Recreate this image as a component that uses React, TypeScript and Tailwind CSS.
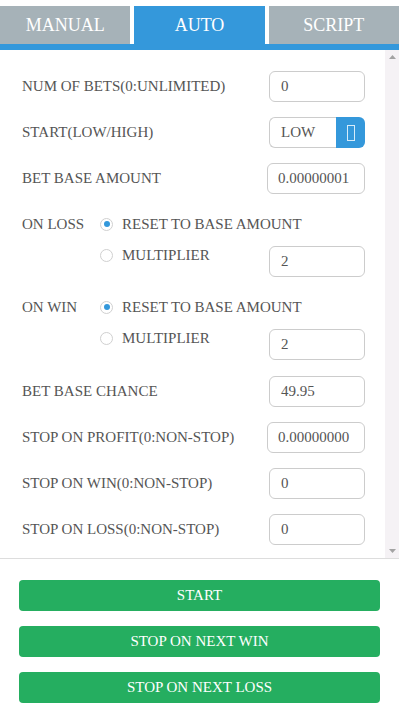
import React from 'react';

const font = { fontFamily: '"Liberation Serif", "Times New Roman", serif' };

function Field({ value, wide }: { value: string; wide?: boolean }) {
  return (
    <div
      className={`${wide ? 'w-[98px] px-[10px]' : 'w-[96px] px-[11px]'} h-[31px] border border-[#cccccc] rounded-[6px] bg-white flex items-center text-[15px] text-[#555555]`}
    >
      {value}
    </div>
  );
}

function Row({ label, value, wide }: { label: string; value: string; wide?: boolean }) {
  return (
    <div className="flex items-center justify-between h-[31px]">
      <span className="text-[15px] text-[#555555]">{label}</span>
      <Field value={value} wide={wide} />
    </div>
  );
}

function Radio({ checked }: { checked?: boolean }) {
  return (
    <span className="w-[13px] h-[13px] rounded-full border border-[#d0d0d0] bg-white flex items-center justify-center shrink-0">
      {checked && <span className="w-[6px] h-[6px] rounded-full bg-[#3498db]" />}
    </span>
  );
}

function ResultGroup({ label, last }: { label: string; last?: boolean }) {
  return (
    <div className={`flex flex-col ${last ? 'pb-[1px]' : ''}`}>
      <div className="flex items-center h-[30px] text-[15px] text-[#555555]">
        <span className="w-[78px]">{label}</span>
        <Radio checked />
        <span className="ml-[9px]">RESET TO BASE AMOUNT</span>
      </div>
      <div className="flex items-start justify-between mt-[1px]">
        <div className="flex items-center h-[30px] pl-[78px] text-[15px] text-[#555555]">
          <Radio />
          <span className="ml-[9px]">MULTIPLIER</span>
        </div>
        <div className="mt-[6px]">
          <Field value="2" />
        </div>
      </div>
    </div>
  );
}

export default function App() {
  const tabs = ['MANUAL', 'AUTO', 'SCRIPT'];
  return (
    <div className="w-[399px] h-[721px] bg-white flex flex-col" style={font}>
      {/* Tabs */}
      <div className="pt-[6px] grid grid-cols-3 gap-[4px]">
        {tabs.map((t) => (
          <div
            key={t}
            className={`h-[38px] flex items-center justify-center text-[18px] text-white ${
              t === 'AUTO' ? 'bg-[#3498db]' : 'bg-[#a6b2b8]'
            }`}
          >
            {t}
          </div>
        ))}
      </div>
      <div className="h-[6px] bg-[#3498db]" />

      {/* Settings */}
      <div className="h-[509px] flex border-b border-[#dddddd]">
        <div className="flex-1 pt-[21px] pl-[22px] pr-[20px] flex flex-col gap-[15px]">
          <Row label="NUM OF BETS(0:UNLIMITED)" value="0" />
          <div className="flex items-center justify-between h-[31px]">
            <span className="text-[15px] text-[#555555]">START(LOW/HIGH)</span>
            <div className="w-[96px] h-[31px] flex">
              <div className="flex-1 border border-r-0 border-[#cccccc] rounded-l-[6px] flex items-center px-[11px] text-[15px] text-[#555555]">
                LOW
              </div>
              <div className="w-[29px] bg-[#3498db] rounded-r-[6px] flex items-center justify-center">
                <span className="w-[8px] h-[16px] border border-[#d6ecfa]" />
              </div>
            </div>
          </div>
          <Row label="BET BASE AMOUNT" value="0.00000001" wide />
          <ResultGroup label="ON LOSS" />
          <ResultGroup label="ON WIN" last />
          <Row label="BET BASE CHANCE" value="49.95" />
          <Row label="STOP ON PROFIT(0:NON-STOP)" value="0.00000000" wide />
          <Row label="STOP ON WIN(0:NON-STOP)" value="0" />
          <Row label="STOP ON LOSS(0:NON-STOP)" value="0" />
        </div>
        {/* Scrollbar */}
        <div className="w-[14px] bg-[#f5f2f5] flex flex-col justify-between items-center py-[5px]">
          <svg width="7" height="4" viewBox="0 0 7 4">
            <path d="M0 4 L3.5 0 L7 4 Z" fill="#a3a3a3" />
          </svg>
          <svg width="7" height="4" viewBox="0 0 7 4">
            <path d="M0 0 L3.5 4 L7 0 Z" fill="#a3a3a3" />
          </svg>
        </div>
      </div>

      {/* Actions */}
      <div className="pt-[21px] px-[19px] flex flex-col gap-[15px]">
        {['START', 'STOP ON NEXT WIN', 'STOP ON NEXT LOSS'].map((b) => (
          <button
            key={b}
            className="h-[31px] w-full rounded-[4px] bg-[#25ae60] text-white text-[15px] flex items-center justify-center"
          >
            {b}
          </button>
        ))}
      </div>
    </div>
  );
}
